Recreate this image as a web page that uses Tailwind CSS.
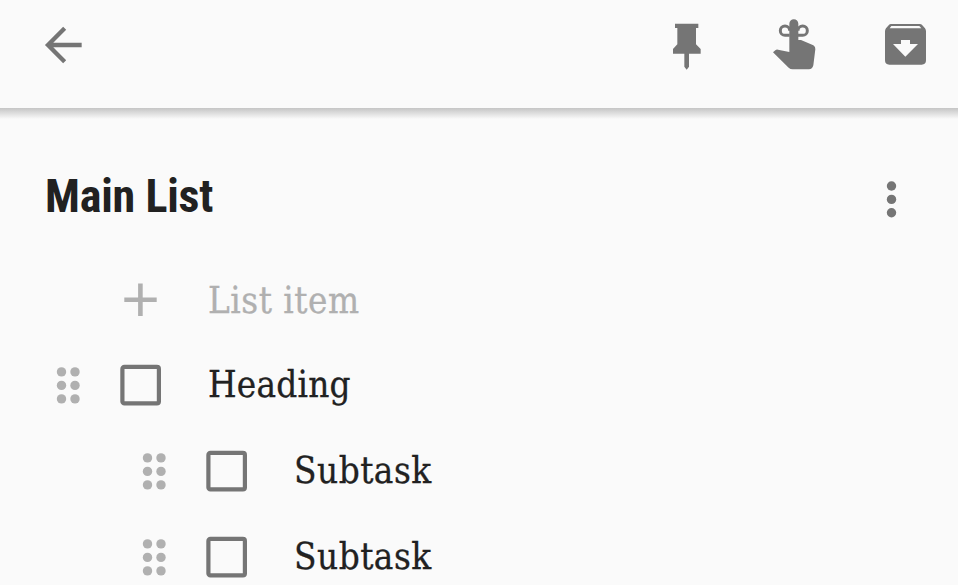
<!DOCTYPE html>
<html lang="en">
<head>
	<meta charset="utf-8">
	<meta name="viewport" content="width=device-width, initial-scale=1">
	<title>Main List</title>
	<script src="https://cdn.jsdelivr.net/npm/@tailwindcss/browser@4"></script>
</head>
<body class="bg-[#fafafa]">
	<div class="w-full h-screen overflow-hidden bg-[#fafafa] text-[#212121]">

		<header class="h-[108px] pt-2.5 pl-[30px] pr-2.5 flex items-start text-[#757575]">
			<button aria-label="Back">
				<svg class="block w-20 h-[70px]" viewBox="0 0 240 210" fill="none" stroke="currentColor" stroke-width="13">
					<path d="M155 105H58M104 55L54 105L104 155"/>
				</svg>
			</button>

			<div class="ml-auto flex">
				<button aria-label="Pin">
					<svg class="block w-20 h-[70px]" viewBox="0 0 240 210" fill="currentColor">
						<path d="M75 41H145V54H138V103L152 117V131H117V170L110 179L103 170V131H69V117L82 103V54H75Z"/>
					</svg>
				</button>
				<button class="ml-[25px]" aria-label="Remind me">
					<svg class="block w-20 h-[70px]" viewBox="0 0 240 210" fill="currentColor">
						<path d="M103 41a13 13 0 0 1 27 0V90H138L175 106Q182 110 181 118L175 166Q172 178 162 178H113Q106 178 101 173L54 127L61 121Q64 118 69 119L103 126Z"/>
						<path d="M104 76H90a14 14 0 1 1 14-14M129 76H143a14 14 0 1 0-14-14" fill="none" stroke="currentColor" stroke-width="9"/>
					</svg>
				</button>
				<button class="ml-[33px]" aria-label="Archive">
					<svg class="block w-20 h-[70px]" viewBox="0 0 240 210" fill="currentColor">
						<path fill-rule="evenodd" d="M69 42H155Q160 42 163 46L171 55Q174 59 174 64V151Q174 164 161 164H64Q51 164 51 151V64Q51 59 54 55L62 46Q65 42 69 42ZM70 48L65 55H160L154 48ZM99 90V102H75L112 140L150 102H126V90Z"/>
					</svg>
				</button>
			</div>
		</header>
		<div class="h-[11px] bg-linear-to-b from-[#c5c5c5] to-[#fafafa]"></div>

		<main class="pl-[46px]">
			<div class="h-[138px] pt-[45px] pr-[56px] flex items-start justify-between">
				<h1 class="-ml-px mt-[5px] w-[168px] h-[54px] leading-[54px] text-[46px] tracking-[-0.2px] font-bold whitespace-nowrap font-['Roboto_Condensed','Roboto',sans-serif]">Main List</h1>
				<button class="mt-[16px] text-[#757575]" aria-label="More">
					<svg class="block w-[21px] h-10" viewBox="0 0 21 40" fill="currentColor">
						<circle cx="10.5" cy="6" r="4.7"/>
						<circle cx="10.5" cy="19.4" r="4.7"/>
						<circle cx="10.5" cy="32.8" r="4.7"/>
					</svg>
				</button>
			</div>

			<ul class="text-[36.5px] tracking-[0.5px] font-['Roboto_Slab','DejaVu_Serif_Condensed','DejaVu_Serif',serif] [-webkit-text-stroke:0.3px_currentColor]">
				<li class="h-[85px] flex items-center text-[#b0b0b0]">
					<svg class="ml-[74px] w-[42px] h-[42px]" viewBox="0 0 42 42" fill="none" stroke="currentColor" stroke-width="4.6">
						<path d="M4.3 20.8H36.7M20.4 4.6V37"/>
					</svg>
					<span class="ml-[46px] pt-[3px]">List item</span>
				</li>
				<li class="h-[86px] flex items-center">
					<svg class="ml-[10px] w-6 h-[38px] text-[#b0b0b0]" viewBox="0 0 24 38" fill="currentColor">
						<circle cx="5.5" cy="5.9" r="4.7"/><circle cx="19" cy="5.9" r="4.7"/>
						<circle cx="5.5" cy="19.4" r="4.7"/><circle cx="19" cy="19.4" r="4.7"/>
						<circle cx="5.5" cy="32.9" r="4.7"/><circle cx="19" cy="32.9" r="4.7"/>
					</svg>
					<svg class="ml-10 w-[42px] h-[42px] text-[#757575]" viewBox="0 0 42 42" fill="none" stroke="currentColor" stroke-width="4.2">
						<rect x="2.4" y="2.9" width="36.5" height="36.5" rx="2"/>
					</svg>
					<span class="ml-[46px] tracking-[0.2px]">Heading</span>
				</li>
				<li class="h-[86px] pl-[86px] flex items-center">
					<svg class="ml-[10px] w-6 h-[38px] text-[#b0b0b0]" viewBox="0 0 24 38" fill="currentColor">
						<circle cx="5.5" cy="5.9" r="4.7"/><circle cx="19" cy="5.9" r="4.7"/>
						<circle cx="5.5" cy="19.4" r="4.7"/><circle cx="19" cy="19.4" r="4.7"/>
						<circle cx="5.5" cy="32.9" r="4.7"/><circle cx="19" cy="32.9" r="4.7"/>
					</svg>
					<svg class="ml-10 w-[42px] h-[42px] text-[#757575]" viewBox="0 0 42 42" fill="none" stroke="currentColor" stroke-width="4.2">
						<rect x="2.4" y="2.9" width="36.5" height="36.5" rx="2"/>
					</svg>
					<span class="ml-[46px]">Subtask</span>
				</li>
				<li class="h-[86px] pl-[86px] flex items-center">
					<svg class="ml-[10px] w-6 h-[38px] text-[#b0b0b0]" viewBox="0 0 24 38" fill="currentColor">
						<circle cx="5.5" cy="5.9" r="4.7"/><circle cx="19" cy="5.9" r="4.7"/>
						<circle cx="5.5" cy="19.4" r="4.7"/><circle cx="19" cy="19.4" r="4.7"/>
						<circle cx="5.5" cy="32.9" r="4.7"/><circle cx="19" cy="32.9" r="4.7"/>
					</svg>
					<svg class="ml-10 w-[42px] h-[42px] text-[#757575]" viewBox="0 0 42 42" fill="none" stroke="currentColor" stroke-width="4.2">
						<rect x="2.4" y="2.9" width="36.5" height="36.5" rx="2"/>
					</svg>
					<span class="ml-[46px]">Subtask</span>
				</li>
			</ul>
		</main>
	</div>
</body>
</html>
